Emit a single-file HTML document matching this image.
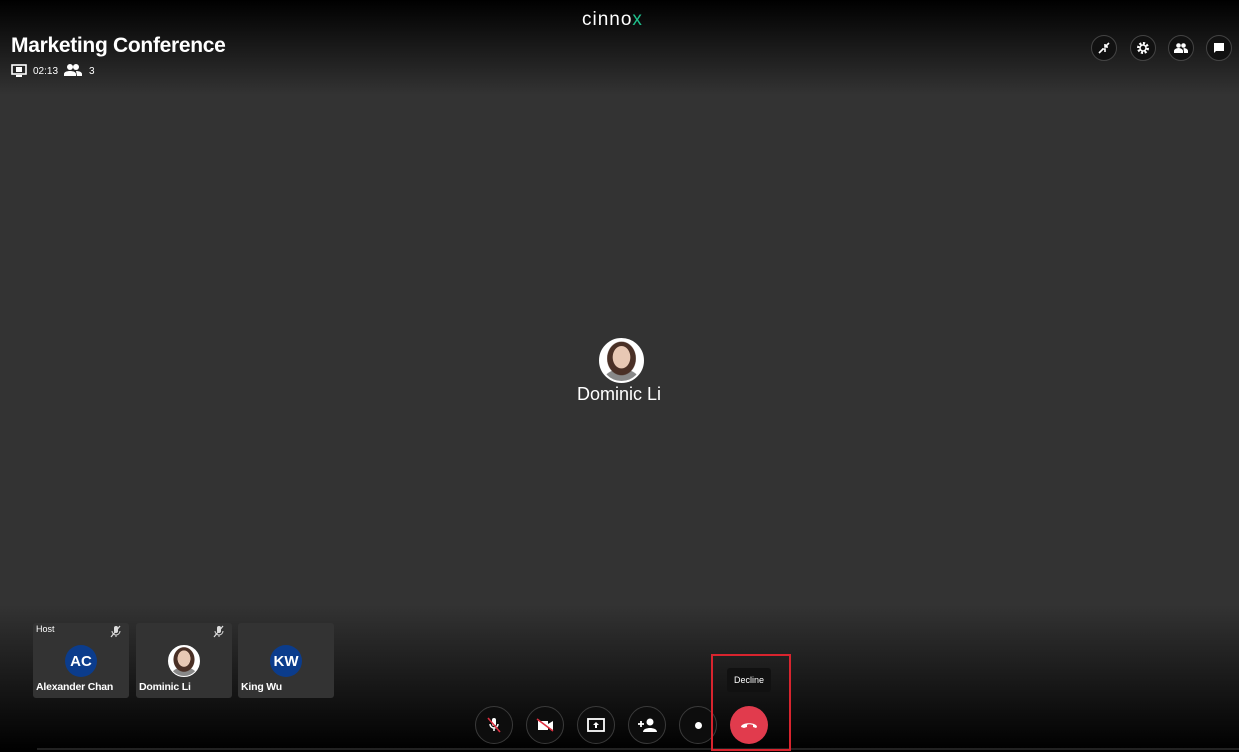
<!DOCTYPE html>
<html><head><style>
*{margin:0;padding:0;box-sizing:border-box}
body{width:1239px;height:752px;background:#333;position:relative;overflow:hidden;font-family:"Liberation Sans",Arial,sans-serif;color:#fff}
.top{position:absolute;left:0;top:0;width:1239px;height:95px;background:linear-gradient(#000,#333)}
.bot{position:absolute;left:0;top:605px;width:1239px;height:147px;background:linear-gradient(#333,#000)}
.abs{position:absolute}
.ib{position:absolute;top:35px;width:26px;height:26px;border-radius:50%;background:#111;border:1px solid #444;display:flex;align-items:center;justify-content:center}
.tile{position:absolute;top:623px;width:96px;height:75px;background:#333;border-radius:3px}
.tile .n{position:absolute;left:3px;bottom:5px;font-size:10.5px;font-weight:bold;letter-spacing:-0.2px}
.av{position:absolute;left:32px;top:22px;width:32px;height:32px;border-radius:50%;background:#0b3c8c;font-size:15px;font-weight:bold;display:flex;align-items:center;justify-content:center}
.photo{background:radial-gradient(ellipse 22% 28% at 50% 42%,#e8c8b4 0 95%,transparent 100%),radial-gradient(ellipse 36% 42% at 50% 45%,#4a3026 0 95%,transparent 100%),radial-gradient(ellipse 45% 30% at 50% 100%,#888 0 95%,transparent 100%),#fff}
.cb{position:absolute;top:706px;width:38px;height:38px;border-radius:50%;border:1px solid #3a3a3a;background:#0d0d0d;display:flex;align-items:center;justify-content:center}
</style></head><body>
<div class="top"></div><div class="bot"></div>
<div class="abs" style="left:582px;top:9px;font-size:19px;letter-spacing:1px;font-weight:normal">cinno<span style="color:#1fc08c">x</span></div>
<div class="abs" style="left:11px;top:34px;font-size:21px;font-weight:bold;letter-spacing:-0.3px">Marketing Conference</div>
<svg class="abs" style="left:11px;top:64px" width="16" height="13"><rect x="1" y="1" width="14" height="9" fill="none" stroke="#fff" stroke-width="1.6"/><rect x="5" y="3" width="6" height="5" fill="#fff"/><rect x="5" y="11" width="6" height="2" fill="#fff"/></svg>
<div class="abs" style="left:33px;top:66px;font-size:10px">02:13</div>
<svg class="abs" style="left:64px;top:64px" width="18" height="12"><circle cx="6" cy="3" r="3" fill="#fff"/><circle cx="12" cy="3" r="3" fill="#fff"/><path d="M0 12v-2c0-2 3-3 6-3s6 1 6 3v2zM12 7c3 0 6 1 6 3v2h-5z" fill="#fff"/></svg>
<div class="abs" style="left:89px;top:66px;font-size:10px">3</div>
<div class="ib" style="left:1091px"><svg width="12" height="12"><path d="M11 1L7 5M1 11l4-4M4 7h3v3M7 2v3h3" stroke="#fff" stroke-width="1.6" fill="none"/></svg></div>
<div class="ib" style="left:1130px"><svg width="12" height="12"><circle cx="6" cy="6" r="4.5" fill="none" stroke="#fff" stroke-width="3" stroke-dasharray="2 1.5"/><circle cx="6" cy="6" r="3" fill="none" stroke="#fff" stroke-width="1.5"/></svg></div>
<div class="ib" style="left:1168px"><svg width="14" height="10"><circle cx="4.5" cy="2.5" r="2.3" fill="#fff"/><circle cx="9.5" cy="2.5" r="2.3" fill="#fff"/><path d="M0 10v-2c0-2 3-3 4.5-3s4.5 1 4.5 3v2zM9.5 5c2 0 4.5 1 4.5 3v2H10z" fill="#fff"/></svg></div>
<div class="ib" style="left:1206px"><svg width="12" height="12"><path d="M1 1h10v8H3l-2 2z" fill="#fff"/></svg></div>
<div class="abs photo" style="left:599px;top:338px;width:45px;height:45px;border-radius:50%;border:2px solid #fff"></div>
<div class="abs" style="left:577px;top:384px;font-size:18px">Dominic Li</div>
<svg style="display:none"></svg>
<div class="tile" style="left:33px"><div class="abs" style="left:3px;top:1px;font-size:9px">Host</div><svg class="abs" style="right:8px;top:2px" width="11" height="13"><rect x="4" y="1" width="4" height="7" rx="2" fill="#ddd"/><path d="M2 6a4 4 0 0 0 8 0M6 10v2" stroke="#ddd" fill="none"/><path d="M1 12L10 1" stroke="#ddd" stroke-width="1.2"/></svg><div class="av">AC</div><div class="n">Alexander Chan</div></div>
<div class="tile" style="left:136px"><svg class="abs" style="right:8px;top:2px" width="11" height="13"><rect x="4" y="1" width="4" height="7" rx="2" fill="#ddd"/><path d="M2 6a4 4 0 0 0 8 0M6 10v2" stroke="#ddd" fill="none"/><path d="M1 12L10 1" stroke="#ddd" stroke-width="1.2"/></svg><div class="av photo" style="border:1px solid #fff"></div><div class="n">Dominic Li</div></div>
<div class="tile" style="left:238px"><div class="av">KW</div><div class="n">King Wu</div></div>
<div class="abs" style="left:37px;top:748px;width:1202px;height:2px;background:#222"></div>
<div class="cb" style="left:475px"><svg width="14" height="16"><rect x="5" y="1" width="4" height="8" rx="2" fill="#fff"/><path d="M3 7a4 4 0 0 0 8 0M7 11v3" stroke="#fff" fill="none" stroke-width="1.5"/><path d="M1 1l12 14" stroke="#e03040" stroke-width="1.6"/></svg></div>
<div class="cb" style="left:526px"><svg width="18" height="14"><rect x="2" y="3" width="10" height="9" fill="#fff"/><path d="M12 6l5-3v9l-5-3z" fill="#fff"/><path d="M1 1l16 12" stroke="#e03040" stroke-width="1.6"/></svg></div>
<div class="cb" style="left:577px"><svg width="18" height="14"><rect x="1" y="1" width="16" height="12" fill="none" stroke="#fff" stroke-width="1.8"/><path d="M9 4l3 3h-2v3H8V7H6z" fill="#fff"/></svg></div>
<div class="cb" style="left:628px"><svg width="20" height="14"><circle cx="13" cy="4" r="3.5" fill="#fff"/><path d="M6 14c0-3 4-4 7-4s7 1 7 4z" fill="#fff"/><path d="M1 6h6M4 3v6" stroke="#fff" stroke-width="1.8"/></svg></div>
<div class="cb" style="left:679px"><div style="width:7px;height:7px;border-radius:50%;background:#fff"></div></div>
<div class="abs" style="left:711px;top:654px;width:80px;height:97px;border:2px solid #d8242e"></div>
<div class="abs" style="left:727px;top:668px;width:44px;height:24px;background:#111;border-radius:3px;font-size:9px;display:flex;align-items:center;justify-content:center">Decline</div>
<div class="cb" style="left:730px;background:#e13b4d;border:none"><svg width="18" height="8"><path d="M1 6c0-5 16-5 16 0l-1 1-3-1v-2c-3-1-5-1-6 0v2l-3 1z" fill="#fff"/></svg></div>
</body></html>
